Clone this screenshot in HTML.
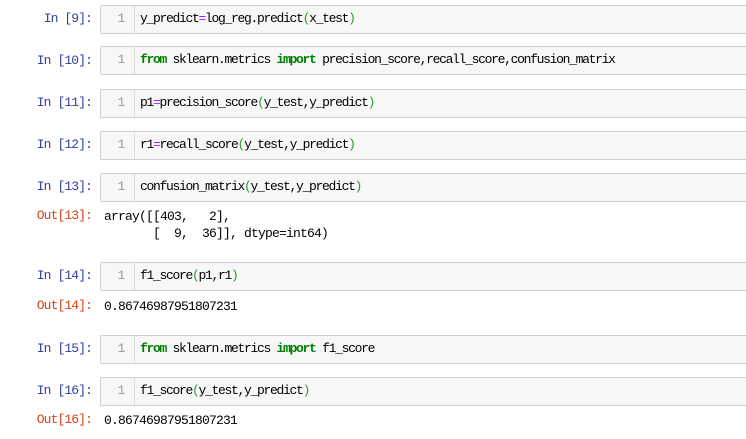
<!DOCTYPE html><html><head><style>
body{margin:0;width:746px;height:439px;background:#fff;font-family:"Liberation Mono","Noto Sans CJK SC",monospace;font-size:13px;letter-spacing:-1.3px;overflow:hidden;position:relative}
.p{position:absolute;right:654px;color:#303F9F;white-space:pre;line-height:16px;letter-spacing:-0.9px}
.o{position:absolute;right:654px;color:#D84315;white-space:pre;line-height:16px;letter-spacing:-0.9px}
.b{position:absolute;left:100px;width:660px;height:27px;background:#f7f7f7;border:1px solid #cfcfcf;border-radius:2px}
.g{position:absolute;left:0;top:0;width:33px;height:27px;border-right:1px solid #ddd;color:#999;text-align:right}
.g span,.c{position:absolute;top:5px;line-height:16px;white-space:pre}
.g span{right:10px}
.c{left:39px;color:#000}
.k{color:#008000;font-weight:bold}.e{color:#AA22FF}.q{color:#2b9a2b}
.t{position:absolute;left:104px;white-space:pre;line-height:17px;color:#000;letter-spacing:-0.8px}
</style></head><body>
<div class="p" style="top:11px">In [9]:</div><div class="b" style="top:5px"><div class="g"><span>1</span></div><div class="c">y_predict<span class="e">=</span>log_reg.predict<span class="q">(</span>x_test<span class="q">)</span></div></div>
<div class="p" style="top:53px">In [10]:</div><div class="b" style="top:46px"><div class="g"><span>1</span></div><div class="c"><span class="k">from</span> sklearn.metrics <span class="k">import</span> precision_score,recall_score,confusion_matrix</div></div>
<div class="p" style="top:95px">In [11]:</div><div class="b" style="top:89px"><div class="g"><span>1</span></div><div class="c">p1<span class="e">=</span>precision_score<span class="q">(</span>y_test,y_predict<span class="q">)</span></div></div>
<div class="p" style="top:137px">In [12]:</div><div class="b" style="top:131px"><div class="g"><span>1</span></div><div class="c">r1<span class="e">=</span>recall_score<span class="q">(</span>y_test,y_predict<span class="q">)</span></div></div>
<div class="p" style="top:179px">In [13]:</div><div class="b" style="top:173px"><div class="g"><span>1</span></div><div class="c">confusion_matrix<span class="q">(</span>y_test,y_predict<span class="q">)</span></div></div>
<div class="o" style="top:208px">Out[13]:</div><div class="t" style="top:208px">array([[403,   2],
       [  9,  36]], dtype=int64)</div>
<div class="p" style="top:268px">In [14]:</div><div class="b" style="top:262px"><div class="g"><span>1</span></div><div class="c">f1_score<span class="q">(</span>p1,r1<span class="q">)</span></div></div>
<div class="o" style="top:298px">Out[14]:</div><div class="t" style="top:298px">0.86746987951807231</div>
<div class="p" style="top:341px">In [15]:</div><div class="b" style="top:335px"><div class="g"><span>1</span></div><div class="c"><span class="k">from</span> sklearn.metrics <span class="k">import</span> f1_score</div></div>
<div class="p" style="top:383px">In [16]:</div><div class="b" style="top:377px"><div class="g"><span>1</span></div><div class="c">f1_score<span class="q">(</span>y_test,y_predict<span class="q">)</span></div></div>
<div class="o" style="top:412px">Out[16]:</div><div class="t" style="top:412px">0.86746987951807231</div>
</body></html>
